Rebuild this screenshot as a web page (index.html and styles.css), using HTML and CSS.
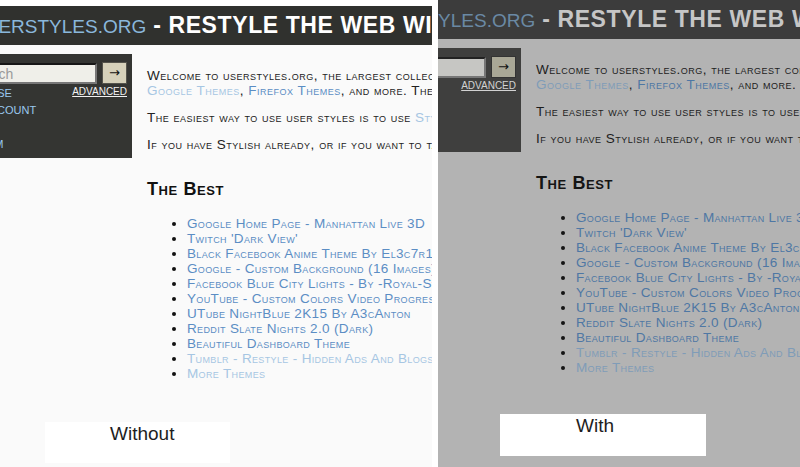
FILE: index.html
```html
<!DOCTYPE html>
<html lang="en">
<head>
<meta charset="utf-8">
<title>Userstyles.org — Without / With</title>
<link rel="stylesheet" href="styles.css">
</head>
<body>
<div class="compare">

  <section class="shot shot--without">
    <div class="viewport">
      <div class="page">
        <header class="masthead">
          <h1 class="masthead__title"><span class="brand">USERSTYLES.ORG</span> - RESTYLE THE WEB WITH STYLISH!</h1>
        </header>
        <div class="layout">
          <aside class="sidebar">
            <form class="search">
              <input class="search__field" type="text" placeholder="Search">
              <button class="search__go" type="button">&#8594;</button>
            </form>
            <div class="sidebar__row">
              <ul class="nav">
                <li><a href="#">Browse</a></li>
                <li><a href="#">My Account</a></li>
                <li><a href="#">Help</a></li>
                <li><a href="#">Forum</a></li>
              </ul>
              <a class="advanced" href="#">Advanced</a>
            </div>
          </aside>
          <main class="content">
            <p>Welcome to userstyles.org, the largest collection of user styles. Customize with Facebook Themes,<br><a class="link link--faded" href="#">Google Themes</a>, <a class="link" href="#">Firefox Themes</a>, and more. There are thousands of styles to choose from.</p>
            <p>The easiest way to use user styles is to use <a class="link link--faded" href="#">Stylish</a>, a browser extension.</p>
            <p>If you have Stylish already, or if you want to take a look around, browse the styles below.</p>
            <h2 class="section-title">The Best</h2>
            <ul class="best">
              <li><a class="link" href="#">Google Home Page - Manhattan Live 3D</a></li>
              <li><a class="link" href="#">Twitch 'Dark View'</a></li>
              <li><a class="link" href="#">Black Facebook Anime Theme By El3c7r1x</a></li>
              <li><a class="link" href="#">Google - Custom Background (16 Images)</a></li>
              <li><a class="link" href="#">Facebook Blue City Lights - By -Royal-Star-</a></li>
              <li><a class="link" href="#">YouTube - Custom Colors Video Progress Bar</a></li>
              <li><a class="link" href="#">UTube NightBlue 2K15 By A3cAnton</a></li>
              <li><a class="link" href="#">Reddit Slate Nights 2.0 (Dark)</a></li>
              <li><a class="link" href="#">Beautiful Dashboard Theme</a></li>
              <li><a class="link link--faded" href="#">Tumblr - Restyle - Hidden Ads And Blogs</a></li>
              <li><a class="link link--faded" href="#">More Themes</a></li>
            </ul>
          </main>
        </div>
      </div>
    </div>
    <div class="caption caption--without">Without</div>
  </section>

  <section class="shot shot--with">
    <div class="viewport">
      <div class="page">
        <header class="masthead">
          <h1 class="masthead__title"><span class="brand">USERSTYLES.ORG</span> - RESTYLE THE WEB WITH STYLISH!</h1>
        </header>
        <div class="layout">
          <aside class="sidebar">
            <form class="search">
              <input class="search__field" type="text" placeholder="Search">
              <button class="search__go" type="button">&#8594;</button>
            </form>
            <div class="sidebar__row">
              <ul class="nav">
                <li><a href="#">Browse</a></li>
                <li><a href="#">My Account</a></li>
                <li><a href="#">Help</a></li>
                <li><a href="#">Forum</a></li>
              </ul>
              <a class="advanced" href="#">Advanced</a>
            </div>
          </aside>
          <main class="content">
            <p>Welcome to userstyles.org, the largest collection of user styles. Customize with Facebook Themes,<br><a class="link link--faded" href="#">Google Themes</a>, <a class="link" href="#">Firefox Themes</a>, and more. There are thousands of styles to choose from.</p>
            <p>The easiest way to use user styles is to use <a class="link link--faded" href="#">Stylish</a>, a browser extension.</p>
            <p>If you have Stylish already, or if you want to take a look around, browse the styles below.</p>
            <h2 class="section-title">The Best</h2>
            <ul class="best">
              <li><a class="link" href="#">Google Home Page - Manhattan Live 3D</a></li>
              <li><a class="link" href="#">Twitch 'Dark View'</a></li>
              <li><a class="link" href="#">Black Facebook Anime Theme By El3c7r1x</a></li>
              <li><a class="link" href="#">Google - Custom Background (16 Images)</a></li>
              <li><a class="link" href="#">Facebook Blue City Lights - By -Royal-Star-</a></li>
              <li><a class="link" href="#">YouTube - Custom Colors Video Progress Bar</a></li>
              <li><a class="link" href="#">UTube NightBlue 2K15 By A3cAnton</a></li>
              <li><a class="link" href="#">Reddit Slate Nights 2.0 (Dark)</a></li>
              <li><a class="link" href="#">Beautiful Dashboard Theme</a></li>
              <li><a class="link link--faded" href="#">Tumblr - Restyle - Hidden Ads And Blogs</a></li>
              <li><a class="link link--faded" href="#">More Themes</a></li>
            </ul>
          </main>
        </div>
      </div>
    </div>
    <div class="caption caption--with">With</div>
  </section>

</div>
</body>
</html>
```

FILE: styles.css
```css
* { box-sizing: border-box; }

html, body {
  margin: 0;
  padding: 0;
  width: 800px;
  height: 467px;
  overflow: hidden;
  background: #ffffff;
  font-family: "Liberation Sans", Arial, sans-serif;
}

.compare {
  display: flex;
  gap: 6px;
  width: 800px;
  height: 467px;
}

/* ---------- one screenshot panel ---------- */
.shot {
  position: relative;
  height: 467px;
  overflow: hidden;
  background: var(--page-bg);
}

.shot--without {
  width: 432px;
  flex: none;
  --page-bg: #fafafa;
  --page-x: -45px;
  --page-top: 6px;
  --head-bg: #30312e;
  --brand: #8ab7db;
  --title: #ffffff;
  --side-bg: #343532;
  --field-bg: #efefe9;
  --field-border: #161616;
  --field-ph: #9a9a9a;
  --btn-bg: #d6d1ba;
  --btn-border: #55544c;
  --adv: #f2f2f2;
  --nav: #9ac8ee;
  --text: #222222;
  --heading: #111111;
  --link: #5b8dc4;
  --link-faded: #a6c6e3;
}

.shot--with {
  flex: 1;
  --page-bg: #b3b3b3;
  --page-x: -94px;
  --page-top: 0px;
  --head-bg: #3c3c3c;
  --brand: #6a89a4;
  --title: #c6c6c6;
  --side-bg: #3f3f3e;
  --field-bg: #c6c6c3;
  --field-border: #222222;
  --field-ph: #8a8a8a;
  --btn-bg: #a9a796;
  --btn-border: #333333;
  --adv: #d2d2d2;
  --nav: #7e9ab2;
  --text: #1d1d1d;
  --heading: #151515;
  --link: #4e77a4;
  --link-faded: #7f9cb8;
}

.viewport {
  border-top: var(--page-top) solid #ffffff;
}

.page {
  width: 1000px;
  margin-left: var(--page-x);
}

/* ---------- masthead ---------- */
.masthead {
  height: 39px;
  background: var(--head-bg);
  display: flex;
  align-items: center;
  padding-left: 17px;
  white-space: nowrap;
}

.masthead__title {
  margin: 0;
  font-size: 23px;
  font-weight: bold;
  letter-spacing: 0.6px;
  color: var(--title);
  line-height: 1;
}

.brand {
  font-size: 19px;
  font-weight: normal;
  letter-spacing: 0;
  color: var(--brand);
}

/* ---------- body layout ---------- */
.layout {
  display: flex;
  align-items: flex-start;
  margin-top: 9px;
}

.sidebar {
  flex: none;
  width: 177px;
  height: 104px;
  padding: 8px 5px 0 8px;
  background: var(--side-bg);
}

.search {
  display: flex;
  gap: 5px;
  margin: 0;
}

.search__field {
  width: 134px;
  height: 21px;
  margin-top: 1px;
  padding: 0 0 0 4px;
  border: 2px solid var(--field-border);
  border-right-color: #777;
  border-bottom-color: #777;
  background: var(--field-bg);
  font-family: "Liberation Sans", Arial, sans-serif;
  font-size: 14px;
}

.search__field::placeholder { color: var(--field-ph); }

.search__go {
  width: 25px;
  height: 22px;
  padding: 0;
  border: 1px solid var(--btn-border);
  background: var(--btn-bg);
  color: #111;
  font-family: "DejaVu Sans", sans-serif;
  font-size: 13px;
  line-height: 18px;
}

.sidebar__row {
  display: flex;
  justify-content: space-between;
  align-items: flex-start;
  padding-top: 0.5px;
}

.nav {
  list-style: none;
  margin: 0;
  padding: 0;
  font-size: 11px;
  line-height: 17px;
  text-transform: uppercase;
  white-space: nowrap;
}

.nav a {
  color: var(--nav);
  text-decoration: none;
}

.advanced {
  font-size: 10px;
  line-height: 13px;
  text-transform: uppercase;
  color: var(--adv);
  text-decoration: underline;
}

/* ---------- main content ---------- */
.content {
  padding: 14px 0 0 15px;
  font-size: 13.5px;
  letter-spacing: 0.35px;
  line-height: 15px;
  font-variant: small-caps;
  color: var(--text);
  white-space: nowrap;
}

.content p {
  margin: 0 0 12px;
  letter-spacing: 0.5px;
}

.link {
  color: var(--link);
  text-decoration: none;
}

.link--faded {
  color: var(--link-faded);
}

.section-title {
  margin: 26px 0 0;
  font-size: 18px;
  line-height: 22px;
  letter-spacing: 0.6px;
  font-weight: bold;
  color: var(--heading);
}

.best {
  margin: 16px 0 0;
  padding-left: 40px;
  list-style: disc;
  color: var(--heading);
}

.best li {
  line-height: 15px;
}

/* ---------- captions laid over the screenshots ---------- */
.caption {
  position: absolute;
  background: #ffffff;
  color: #1e1e1e;
  font-size: 19px;
  line-height: 22px;
  padding-top: 1px;
}

.caption--without {
  left: 45px;
  top: 422px;
  width: 185px;
  height: 41px;
  padding-left: 65px;
}

.caption--with {
  left: 62px;
  top: 414px;
  width: 206px;
  height: 42px;
  padding-left: 76px;
}
```
